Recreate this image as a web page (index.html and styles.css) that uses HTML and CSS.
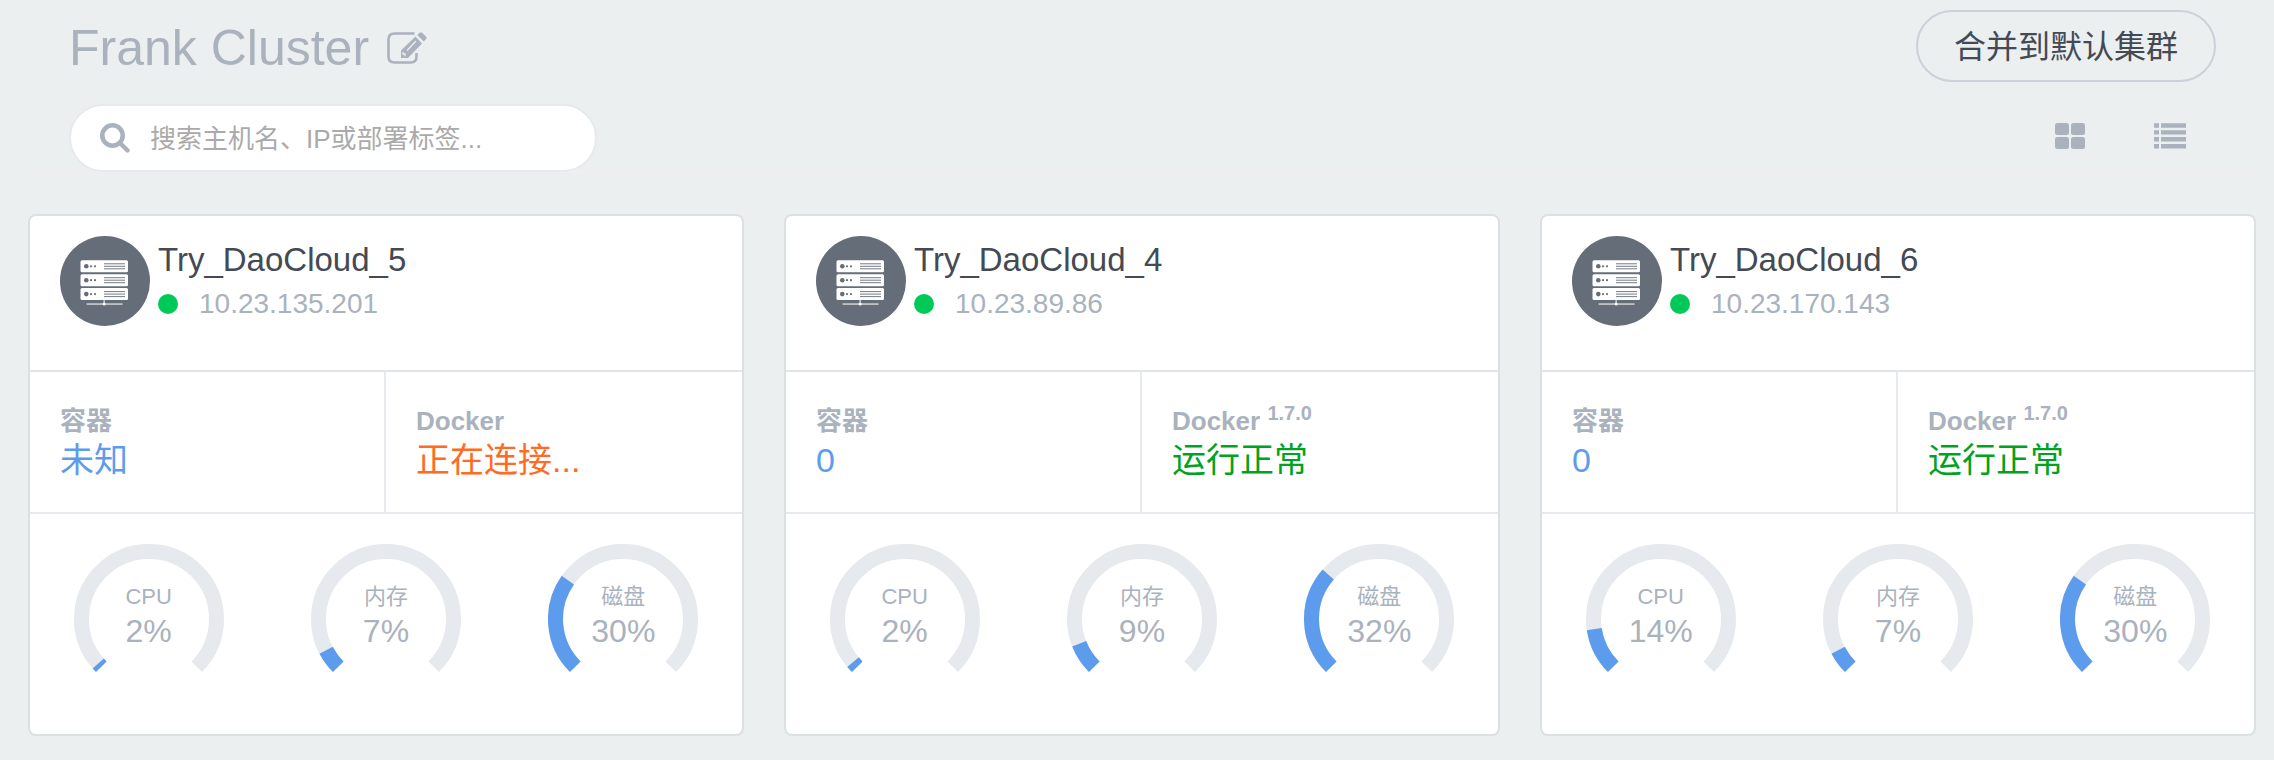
FILE: index.html
```html
<!DOCTYPE html>
<html lang="zh-CN">
<head>
<meta charset="utf-8">
<meta name="viewport" content="width=device-width, initial-scale=1">
<title>Frank Cluster</title>
<link rel="stylesheet" href="styles.css">
</head>
<body>
<svg class="defs" aria-hidden="true">
  <symbol id="server" viewBox="0 0 90 90">
    <g fill="#fff">
      <rect x="20.500" y="24.300" width="47.500" height="12" rx="1.500"/>
      <rect x="20.500" y="38.200" width="47.500" height="12" rx="1.500"/>
      <rect x="20.500" y="52.100" width="47.500" height="12" rx="1.500"/>
      <rect x="26.500" y="67.300" width="36" height="1.500" opacity=".7"/>
      <rect x="43.600" y="64" width="1" height="4"/>
      <circle cx="44.200" cy="68" r="1.500"/>
    </g>
    <g fill="#656d78">
      <circle cx="26.300" cy="30.300" r="2.300"/><circle cx="31" cy="30.300" r="1.100"/><circle cx="35" cy="30.300" r="1.100"/>
      <circle cx="26.300" cy="44.200" r="2.300"/><circle cx="31" cy="44.200" r="1.100"/><circle cx="35" cy="44.200" r="1.100"/>
      <circle cx="26.300" cy="58.100" r="2.300"/><circle cx="31" cy="58.100" r="1.100"/><circle cx="35" cy="58.100" r="1.100"/>
    </g>
    <path d="M44 27.800h21M44 30.300h21M44 32.800h21M44 41.700h21M44 44.200h21M44 46.700h21M44 55.600h21M44 58.100h21M44 60.600h21" stroke="#656d78" stroke-width=".9"/>
  </symbol>
</svg>

<header class="top">
  <div class="row">
    <div class="title-group">
      <h1 class="title">Frank Cluster</h1>
      <button class="icon-btn" type="button" aria-label="编辑">
        <svg width="40" height="32" viewBox="0 0 40 32" fill="none">
          <path d="M27.500 1.500H7.500Q1.500 1.500 1.500 7.500v17q0 6 6 6h16q6 0 6-6v-3.500" stroke="#aab2bd" stroke-width="2.600"/>
          <path fill="#aab2bd" d="M14 26v-7.500L28.500 4.500l6.500 7L21 26zM30.300 3l2.200-2.200q1.300-1.300 2.600 0l3.800 3.800q1.300 1.300 0 2.600l-2.200 2.300z"/>
          <path d="M16 20v2h2v2.200M20 18.500 29 9" stroke="#ebeff0" stroke-width="1.300"/>
        </svg>
      </button>
    </div>
    <button class="merge" type="button">合并到默认集群</button>
  </div>
  <div class="row">
    <label class="search">
      <svg width="30" height="30" viewBox="0 0 30 30" fill="none" stroke="#aab2bd">
        <circle cx="12.500" cy="12.500" r="10.200" stroke-width="4.600"/>
        <path d="M20.500 20.500l7 7" stroke-width="4.400" stroke-linecap="round"/>
      </svg>
      <input type="text" placeholder="搜索主机名、IP或部署标签..." aria-label="搜索主机名、IP或部署标签">
    </label>
    <div class="views">
      <button class="icon-btn" type="button" aria-label="卡片视图">
        <svg width="30" height="26" viewBox="0 0 30 26" fill="#aab2bd">
          <rect width="14" height="12" rx="2.500"/><rect x="16" width="14" height="12" rx="2.500"/>
          <rect y="14" width="14" height="12" rx="2.500"/><rect x="16" y="14" width="14" height="12" rx="2.500"/>
        </svg>
      </button>
      <button class="icon-btn" type="button" aria-label="列表视图">
        <svg width="32" height="26" viewBox="0 0 32 26" fill="#aab2bd">
          <path d="M0 .3h5v4.400H0zM7 .3h25v4.400H7zM0 7.200h5v4.400H0zM7 7.200h25v4.400H7zM0 14.100h5v4.400H0zM7 14.100h25v4.400H7zM0 21h5v4.400H0zM7 21h25v4.400H7z"/>
        </svg>
      </button>
    </div>
  </div>
</header>

<main class="cards">
  <article class="card">
    <div class="host">
      <svg class="avatar" viewBox="0 0 90 90" aria-hidden="true"><use href="#server"/></svg>
      <div class="host-text">
        <h2 class="name">Try_DaoCloud_5</h2>
        <p class="ip"><span class="dot"></span>10.23.135.201</p>
      </div>
    </div>
    <div class="stats">
      <div class="stat"><p class="label">容器</p><p class="value blue">未知</p></div>
      <div class="stat"><p class="label">Docker</p><p class="value orange">正在连接...</p></div>
    </div>
    <div class="gauges">
      <div class="gauge">
        <svg viewBox="0 0 150 150"><path class="track" d="M27.270 122.730A67.500 67.500 0 1 1 122.730 122.730"/><path class="fill" pathLength="100" stroke-dasharray="1.400 200" d="M27.270 122.730A67.500 67.500 0 1 1 122.730 122.730"/></svg>
        <div class="reading"><span class="metric">CPU</span><span class="percent">2%</span></div>
      </div>
      <div class="gauge">
        <svg viewBox="0 0 150 150"><path class="track" d="M27.270 122.730A67.500 67.500 0 1 1 122.730 122.730"/><path class="fill" pathLength="100" stroke-dasharray="6.500 200" d="M27.270 122.730A67.500 67.500 0 1 1 122.730 122.730"/></svg>
        <div class="reading"><span class="metric">内存</span><span class="percent">7%</span></div>
      </div>
      <div class="gauge">
        <svg viewBox="0 0 150 150"><path class="track" d="M27.270 122.730A67.500 67.500 0 1 1 122.730 122.730"/><path class="fill" pathLength="100" stroke-dasharray="29.700 200" d="M27.270 122.730A67.500 67.500 0 1 1 122.730 122.730"/></svg>
        <div class="reading"><span class="metric">磁盘</span><span class="percent">30%</span></div>
      </div>
    </div>
  </article>

  <article class="card">
    <div class="host">
      <svg class="avatar" viewBox="0 0 90 90" aria-hidden="true"><use href="#server"/></svg>
      <div class="host-text">
        <h2 class="name">Try_DaoCloud_4</h2>
        <p class="ip"><span class="dot"></span>10.23.89.86</p>
      </div>
    </div>
    <div class="stats">
      <div class="stat"><p class="label">容器</p><p class="value blue">0</p></div>
      <div class="stat"><p class="label">Docker <sup>1.7.0</sup></p><p class="value green">运行正常</p></div>
    </div>
    <div class="gauges">
      <div class="gauge">
        <svg viewBox="0 0 150 150"><path class="track" d="M27.270 122.730A67.500 67.500 0 1 1 122.730 122.730"/><path class="fill" pathLength="100" stroke-dasharray="2 200" d="M27.270 122.730A67.500 67.500 0 1 1 122.730 122.730"/></svg>
        <div class="reading"><span class="metric">CPU</span><span class="percent">2%</span></div>
      </div>
      <div class="gauge">
        <svg viewBox="0 0 150 150"><path class="track" d="M27.270 122.730A67.500 67.500 0 1 1 122.730 122.730"/><path class="fill" pathLength="100" stroke-dasharray="8.700 200" d="M27.270 122.730A67.500 67.500 0 1 1 122.730 122.730"/></svg>
        <div class="reading"><span class="metric">内存</span><span class="percent">9%</span></div>
      </div>
      <div class="gauge">
        <svg viewBox="0 0 150 150"><path class="track" d="M27.270 122.730A67.500 67.500 0 1 1 122.730 122.730"/><path class="fill" pathLength="100" stroke-dasharray="31.900 200" d="M27.270 122.730A67.500 67.500 0 1 1 122.730 122.730"/></svg>
        <div class="reading"><span class="metric">磁盘</span><span class="percent">32%</span></div>
      </div>
    </div>
  </article>

  <article class="card">
    <div class="host">
      <svg class="avatar" viewBox="0 0 90 90" aria-hidden="true"><use href="#server"/></svg>
      <div class="host-text">
        <h2 class="name">Try_DaoCloud_6</h2>
        <p class="ip"><span class="dot"></span>10.23.170.143</p>
      </div>
    </div>
    <div class="stats">
      <div class="stat"><p class="label">容器</p><p class="value blue">0</p></div>
      <div class="stat"><p class="label">Docker <sup>1.7.0</sup></p><p class="value green">运行正常</p></div>
    </div>
    <div class="gauges">
      <div class="gauge">
        <svg viewBox="0 0 150 150"><path class="track" d="M27.270 122.730A67.500 67.500 0 1 1 122.730 122.730"/><path class="fill" pathLength="100" stroke-dasharray="13.500 200" d="M27.270 122.730A67.500 67.500 0 1 1 122.730 122.730"/></svg>
        <div class="reading"><span class="metric">CPU</span><span class="percent">14%</span></div>
      </div>
      <div class="gauge">
        <svg viewBox="0 0 150 150"><path class="track" d="M27.270 122.730A67.500 67.500 0 1 1 122.730 122.730"/><path class="fill" pathLength="100" stroke-dasharray="6.500 200" d="M27.270 122.730A67.500 67.500 0 1 1 122.730 122.730"/></svg>
        <div class="reading"><span class="metric">内存</span><span class="percent">7%</span></div>
      </div>
      <div class="gauge">
        <svg viewBox="0 0 150 150"><path class="track" d="M27.270 122.730A67.500 67.500 0 1 1 122.730 122.730"/><path class="fill" pathLength="100" stroke-dasharray="29.700 200" d="M27.270 122.730A67.500 67.500 0 1 1 122.730 122.730"/></svg>
        <div class="reading"><span class="metric">磁盘</span><span class="percent">30%</span></div>
      </div>
    </div>
  </article>
</main>
</body>
</html>
```
FILE: styles.css
```css
* {
  box-sizing: border-box;
}

body {
  margin: 0;
  padding: 10px 18px 24px 28px;
  background: #ebeff0;
  color: #aab2bd;
  font-family: "Liberation Sans", "Noto Sans CJK SC", sans-serif;
}

h1,
h2,
p {
  margin: 0;
  font-weight: 400;
}

svg {
  display: block;
}

.defs {
  position: absolute;
  width: 0;
  height: 0;
}

button {
  padding: 0;
  border: 0;
  background: none;
  font-family: inherit;
  cursor: pointer;
}

.top {
  display: flex;
  flex-direction: column;
  gap: 22px;
  padding: 0 40px 0 41px;
  border-bottom: 1px solid #f0eeef;
}

.row {
  display: flex;
  justify-content: space-between;
  align-items: center;
}

.title-group {
  display: flex;
  align-items: center;
  gap: 18px;
  padding-top: 4px;
}

.title {
  font-size: 50px;
  line-height: 68px;
}

.merge {
  height: 72px;
  padding: 2px 36px 0;
  border: 2px solid #ccd1d9;
  border-radius: 36px;
  color: #434a54;
  font-size: 32px;
  line-height: 66px;
}

.search {
  display: flex;
  align-items: center;
  gap: 20px;
  width: 528px;
  height: 68px;
  padding: 0 29px;
  border: 2px solid #e6e9ed;
  border-radius: 34px;
  background: #fff;
}

.search input {
  flex: 1;
  min-width: 0;
  padding: 2px 0 0;
  border: 0;
  outline: 0;
  background: none;
  color: #434a54;
  font-family: inherit;
  font-size: 26px;
}

.search input::placeholder {
  color: #aaa;
}

.views {
  display: flex;
  gap: 69px;
  padding: 0 30px 4px 0;
}

.cards {
  display: grid;
  grid-template-columns: repeat(3, 1fr);
  gap: 40px;
  padding-top: 41px;
}

.card {
  border: 2px solid #dbe0e2;
  border-radius: 8px;
  background: #fff;
}

.host {
  display: flex;
  gap: 8px;
  padding: 20px 30px 44px;
  border-bottom: 2px solid #e2e5e7;
}

.avatar {
  width: 90px;
  height: 90px;
  border-radius: 50%;
  background: #656d78;
}

.name {
  color: #434a54;
  font-size: 33px;
  line-height: 48px;
}

.ip {
  display: flex;
  align-items: center;
  gap: 21px;
  font-size: 28px;
  line-height: 40px;
}

.dot {
  width: 20px;
  height: 20px;
  border-radius: 50%;
  background: #00c957;
}

.stats {
  display: grid;
  grid-template-columns: 1fr 1fr;
  border-bottom: 2px solid #e6e9ed;
}

.stat {
  padding: 30px 30px 32px;
}

.stat:first-child {
  border-right: 2px solid #e6e9ed;
}

.label {
  font-size: 26px;
  font-weight: 700;
  line-height: 38px;
}

.label sup {
  font-size: 20px;
  line-height: 0;
}

.value {
  font-size: 34px;
  line-height: 40px;
}

.blue {
  color: #5d9cec;
}

.orange {
  color: #ff6b22;
}

.green {
  color: #00a321;
}

.gauges {
  display: grid;
  grid-template-columns: repeat(3, 1fr);
  padding: 30px 0 40px;
}

.gauge {
  display: grid;
  justify-content: center;
}

.gauge > * {
  grid-area: 1 / 1;
}

.gauge svg {
  width: 150px;
  height: 150px;
  fill: none;
  stroke-width: 15;
}

.track {
  stroke: #e6e9ed;
}

.fill {
  stroke: #5d9cec;
}

.reading {
  display: flex;
  flex-direction: column;
  align-items: center;
  padding-top: 36px;
}

.metric {
  font-size: 22px;
  line-height: 34px;
}

.percent {
  font-size: 32px;
  line-height: 34px;
}
```
